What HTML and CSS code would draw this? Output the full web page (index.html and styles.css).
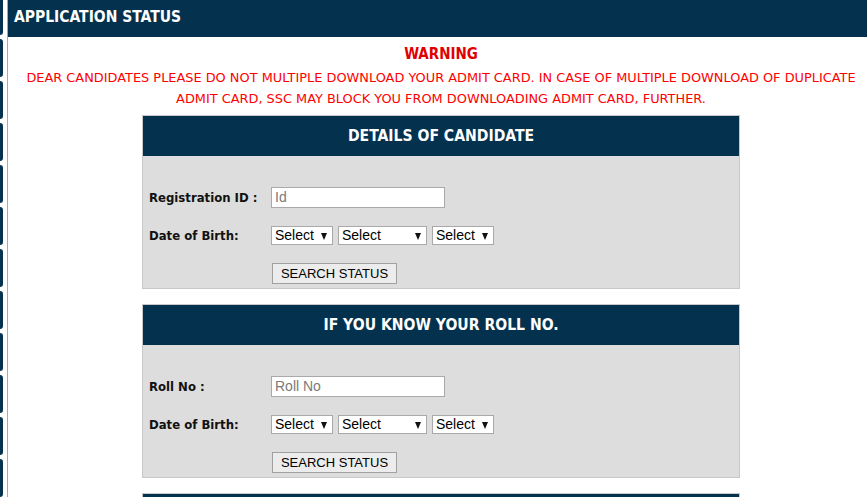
FILE: index.html
```html
<!DOCTYPE html>
<html lang="en">
<head>
<meta charset="utf-8">
<title>Application Status</title>
<link rel="stylesheet" href="styles.css">
</head>
<body>
<div class="page">
  <aside class="sidebar">
    <div class="tab"></div><div class="tab"></div><div class="tab"></div><div class="tab"></div>
    <div class="tab"></div><div class="tab"></div><div class="tab"></div><div class="tab"></div>
    <div class="tab"></div><div class="tab"></div><div class="tab"></div><div class="tab"></div>
  </aside>
  <main class="main">
    <div class="topbar">APPLICATION STATUS</div>
    <div class="content">
      <div class="warning-title">WARNING</div>
      <p class="warning-text">DEAR CANDIDATES PLEASE DO NOT MULTIPLE DOWNLOAD YOUR ADMIT CARD. IN CASE OF MULTIPLE DOWNLOAD OF DUPLICATE ADMIT CARD, SSC MAY BLOCK YOU FROM DOWNLOADING ADMIT CARD, FURTHER.</p>

      <section class="card">
        <div class="card-head">DETAILS OF CANDIDATE</div>
        <div class="card-body">
          <div class="row">
            <label class="lbl">Registration ID :</label>
            <input class="txt" type="text" placeholder="Id">
          </div>
          <div class="row">
            <label class="lbl">Date of Birth:</label>
            <div class="sels">
              <span class="sel sel-s">Select</span>
              <span class="sel sel-m">Select</span>
              <span class="sel sel-s">Select</span>
            </div>
          </div>
          <div class="row row-btn">
            <span class="lbl"></span>
            <button class="btn" type="button">SEARCH STATUS</button>
          </div>
        </div>
      </section>

      <section class="card">
        <div class="card-head">IF YOU KNOW YOUR ROLL NO.</div>
        <div class="card-body">
          <div class="row">
            <label class="lbl">Roll No :</label>
            <input class="txt" type="text" placeholder="Roll No">
          </div>
          <div class="row">
            <label class="lbl">Date of Birth:</label>
            <div class="sels">
              <span class="sel sel-s">Select</span>
              <span class="sel sel-m">Select</span>
              <span class="sel sel-s">Select</span>
            </div>
          </div>
          <div class="row row-btn">
            <span class="lbl"></span>
            <button class="btn" type="button">SEARCH STATUS</button>
          </div>
        </div>
      </section>

      <section class="card">
        <div class="card-head"></div>
        <div class="card-body"></div>
      </section>
    </div>
  </main>
</div>
</body>
</html>
```
FILE: styles.css
```css
html, body {
  margin: 0;
  padding: 0;
  background: #ffffff;
}
body {
  font-family: "DejaVu Sans Condensed", "DejaVu Sans", sans-serif;
  overflow: hidden;
}
.page {
  display: flex;
  min-height: 497px;
}
.sidebar {
  width: 7px;
  flex: 0 0 7px;
  border-right: 1px solid #a8a8a8;
  display: flex;
  flex-direction: column;
  gap: 4px;
  margin-top: -3px;
  overflow: hidden;
}
.tab {
  width: 3px;
  height: 38px;
  flex: 0 0 38px;
  background: #05324f;
  border-radius: 0 3px 3px 0;
}
.main {
  flex: 1;
  min-width: 0;
}
.topbar {
  height: 37px;
  line-height: 34px;
  background: #04324e;
  color: #ffffff;
  font-weight: bold;
  font-size: 15.5px;
  padding-left: 6px;
}
.content {
  padding-left: 7px;
  text-align: center;
}
.warning-title {
  margin-top: 7px;
  line-height: 20px;
  color: #e00000;
  font-weight: bold;
  font-size: 15px;
}
.warning-text {
  margin: 3px 0 0;
  line-height: 21px;
  color: #ff0000;
  font-family: "DejaVu Sans", sans-serif;
  font-size: 12.9px;
  padding: 0 6px;
}
.card {
  width: 596px;
  margin: 6px auto 15px;
  border: 1px solid #c8c8c8;
  text-align: left;
}
.card-head {
  height: 40px;
  line-height: 40px;
  background: #04324e;
  color: #ffffff;
  font-weight: bold;
  font-size: 15.6px;
  text-align: center;
}
.card-body {
  background: #dddddd;
  padding: 22px 0 0 6px;
  min-height: 110px;
}
.row {
  display: flex;
  align-items: center;
  height: 38px;
}
.row-btn {
  align-items: flex-start;
  padding-top: 9px;
  box-sizing: border-box;
  height: 32px;
}
.lbl {
  width: 122px;
  flex: 0 0 122px;
  font-weight: bold;
  font-size: 13px;
  color: #111111;
}
.txt {
  width: 174px;
  height: 21px;
  box-sizing: border-box;
  border: 1px solid #a9a9a9;
  background: #ffffff;
  padding: 0 3px;
  margin: 0;
  font-family: "Liberation Sans", Arial, sans-serif;
  font-size: 14px;
  color: #333333;
  outline: none;
}
.txt::placeholder {
  color: #7a7a7a;
}
.sels {
  display: flex;
  gap: 5px;
}
.sel {
  position: relative;
  display: block;
  height: 19px;
  line-height: 17px;
  box-sizing: border-box;
  border: 1px solid #a9a9a9;
  background: #ffffff;
  padding-left: 3px;
  font-family: "Liberation Sans", Arial, sans-serif;
  font-size: 14px;
  color: #000000;
}
.sel::after {
  content: "";
  position: absolute;
  right: 5px;
  top: 6px;
  border-left: 3.5px solid transparent;
  border-right: 3.5px solid transparent;
  border-top: 7px solid #111111;
}
.sel-s { width: 62px; }
.sel-m { width: 89px; }
.btn {
  width: 125px;
  height: 21px;
  margin: 0 0 0 1px;
  padding: 0;
  border: 1px solid #a0a0a0;
  background: #ececec;
  font-family: "Liberation Sans", Arial, sans-serif;
  font-size: 13px;
  color: #000000;
}
```
